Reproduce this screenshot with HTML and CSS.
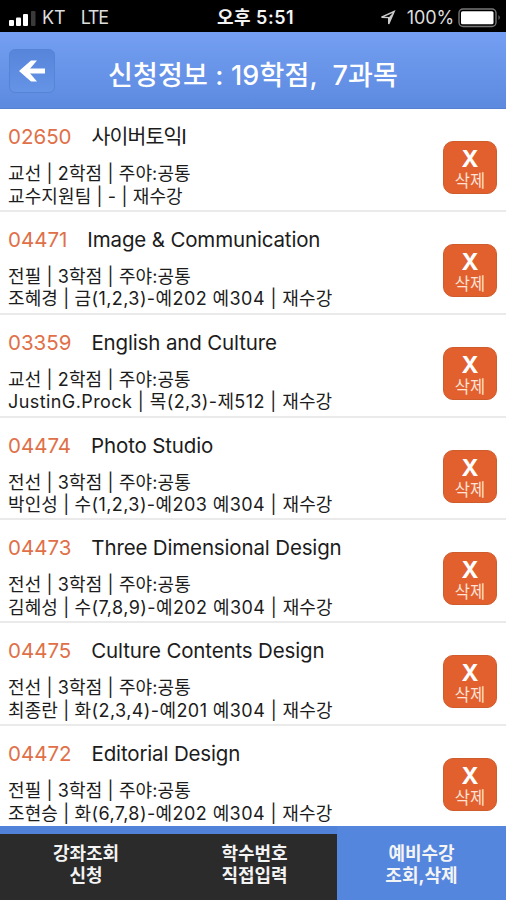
FILE: index.html
```html
<!DOCTYPE html>
<html lang="ko">
<head>
<meta charset="utf-8">
<title>신청정보</title>
<link rel="stylesheet" href="styles.css">
</head>
<body>
<div class="status">
  <div class="carrier">
    <svg width="28" height="18" viewBox="0 0 28 18"><g fill="#fff"><rect x="0" y="11" width="5" height="6" rx="1"/><rect x="7" y="8.500" width="5" height="8.500" rx="1"/><rect x="14" y="5" width="5" height="12" rx="1"/></g><rect x="22" y="2" width="4.500" height="15" rx="1" fill="#3a3a3a"/></svg>
    <span class="kt">KT</span><span class="lte">LTE</span>
  </div>
  <div class="clock">오후 5:51</div>
  <div class="power">
    <svg width="16" height="16" viewBox="0 0 16 16"><path d="M1.500 7.200L14.200 1.500L8.700 14V7.600Z" fill="none" stroke="#ccc" stroke-width="1.400"/><path d="M8.700 7.500L14.200 1.500L8.700 14Z" fill="#ccc"/></svg>
    <span class="pct">100%</span>
    <svg class="battery" width="44" height="20" viewBox="0 0 44 20"><rect x="1" y="1" width="37" height="17.500" rx="4" fill="none" stroke="#777" stroke-width="1.400"/><rect x="3" y="3.300" width="32.500" height="13" rx="1.500" fill="#fff"/><path d="M40.500 7q2.500 2.500 0 5z" fill="#777"/></svg>
  </div>
</div>
<header class="header">
  <button class="back"><svg width="28" height="24" viewBox="0 0 28 24"><path d="M27 12H5" fill="none" stroke="#fff" stroke-width="5"/><path d="M13 1.500H19L10 12L19 22.500H13L1 12Z" fill="#fff"/></svg></button>
  <h1 class="title">신청정보 : 19학점,&nbsp; 7과목</h1>
</header>
<main class="list">
  <section class="row"><div class="info"><div class="head"><span class="code">02650</span><span class="name ko">사이버토익I</span></div><p>교선 | 2학점 | 주야:공통</p><p>교수지원팀 | - | 재수강</p></div><button class="del"><b>X</b><span>삭제</span></button></section>
  <section class="row"><div class="info"><div class="head"><span class="code">04471</span><span class="name">Image &amp; Communication</span></div><p>전필 | 3학점 | 주야:공통</p><p>조혜경 | <span class="time">금(1,2,3)-예202 예304 | </span>재수강</p></div><button class="del"><b>X</b><span>삭제</span></button></section>
  <section class="row"><div class="info"><div class="head"><span class="code">03359</span><span class="name">English and Culture</span></div><p>교선 | 2학점 | 주야:공통</p><p><span class="time">JustinG.Prock | 목(2,3)-제512 | </span>재수강</p></div><button class="del"><b>X</b><span>삭제</span></button></section>
  <section class="row"><div class="info"><div class="head"><span class="code">04474</span><span class="name">Photo Studio</span></div><p>전선 | 3학점 | 주야:공통</p><p>박인성 | <span class="time">수(1,2,3)-예203 예304 | </span>재수강</p></div><button class="del"><b>X</b><span>삭제</span></button></section>
  <section class="row"><div class="info"><div class="head"><span class="code">04473</span><span class="name">Three Dimensional Design</span></div><p>전선 | 3학점 | 주야:공통</p><p>김혜성 | <span class="time">수(7,8,9)-예202 예304 | </span>재수강</p></div><button class="del"><b>X</b><span>삭제</span></button></section>
  <section class="row"><div class="info"><div class="head"><span class="code">04475</span><span class="name">Culture Contents Design</span></div><p>전선 | 3학점 | 주야:공통</p><p>최종란 | <span class="time">화(2,3,4)-예201 예304 | </span>재수강</p></div><button class="del"><b>X</b><span>삭제</span></button></section>
  <section class="row"><div class="info"><div class="head"><span class="code">04472</span><span class="name">Editorial Design</span></div><p>전필 | 3학점 | 주야:공통</p><p>조현승 | <span class="time">화(6,7,8)-예202 예304 | </span>재수강</p></div><button class="del"><b>X</b><span>삭제</span></button></section>
</main>
<nav class="tabs">
  <a class="tab">강좌조회<br>신청</a>
  <a class="tab">학수번호<br>직접입력</a>
  <a class="tab active">예비수강<br>조회,삭제</a>
</nav>
</body>
</html>
```
FILE: styles.css
```css
* { box-sizing: border-box; }
body {
  margin: 0;
  width: 506px;
  height: 900px;
  overflow: hidden;
  display: flex;
  flex-direction: column;
  background: #fff;
  color: #1c1c1c;
  font-family: Inter, "Noto Sans CJK KR", sans-serif;
}
button { border: 0; padding: 0; font-family: inherit; color: #fff; }
p { margin: 0; }
.status {
  flex: none;
  height: 32px;
  padding: 3px 4px 0 9px;
  display: grid;
  grid-template-columns: 1fr auto 1fr;
  align-items: center;
  background: #000;
  color: #ddd;
  font-size: 18px;
  line-height: 29px;
}
.carrier, .power { display: flex; align-items: center; }
.kt { margin-left: 5px; }
.lte { margin-left: 15px; letter-spacing: -1.3px; }
.clock { color: #f4f4f4; font-weight: 600; font-size: 18px; letter-spacing: 0.5px; }
.power { justify-content: flex-end; }
.pct { margin: 0 4px 0 11px; letter-spacing: -0.1px; }
.header {
  flex: none;
  height: 77px;
  padding: 0 9px;
  display: grid;
  grid-template-columns: 46px 1fr 46px;
  align-items: center;
  background: linear-gradient(#749ff2, #5c8adf);
  border-bottom: 1px solid #5681d2;
}
.back {
  width: 46px;
  height: 44px;
  display: flex;
  align-items: center;
  justify-content: center;
  margin-top: 1px;
  border: 1px solid #5684d4;
  border-radius: 6px;
  background: linear-gradient(#5685da, #6593e6);
}
.title {
  margin: 11px 0 0;
  color: #fff;
  text-align: center;
  font-size: 27px;
  font-weight: 500;
  line-height: 38px;
  letter-spacing: 0.15px;
  white-space: pre;
}
.list { flex: 1; min-height: 0; overflow: hidden; }
.row {
  height: 102.85px;
  padding: 0 9px 0 8px;
  display: flex;
  justify-content: space-between;
  border-bottom: 2px solid #eaeaea;
}
.info { padding-top: 13px; white-space: nowrap; }
.head {
  display: flex;
  gap: 20px;
  height: 41px;
  font-size: 20.5px;
  line-height: 30.5px;
}
.code { color: #e07048; }
.name { letter-spacing: -0.15px; }
.name.ko { letter-spacing: -0.9px; }
.info p { font-size: 18px; line-height: 22.5px; height: 22.5px; letter-spacing: 0.12px; }
.info .time { letter-spacing: 0.42px; }
.del {
  margin-top: 32px;
  width: 54px;
  height: 53px;
  padding-top: 5px;
  display: flex;
  flex-direction: column;
  align-items: center;
  border-radius: 10px;
  border: 1px solid #cf5c2c;
  background: #e2602e;
}
.del b { font-size: 23px; line-height: 25px; }
.del span { font-size: 16.5px; line-height: 19px; color: #ffe3d6; }
.tabs {
  flex: none;
  height: 74px;
  display: grid;
  grid-template-columns: 169px 168px 1fr;
  background: #4f82d8;
}
.tab {
  padding: 9px 0 0 3px;
  margin-top: 8px;
  background: #2b2b2b;
  color: #f4f4f4;
  text-align: center;
  font-size: 18px;
  font-weight: 700;
  line-height: 21.5px;
}
.tab.active { background: #5586de; margin-top: 0; padding-top: 17px; padding-left: 0; }
```
